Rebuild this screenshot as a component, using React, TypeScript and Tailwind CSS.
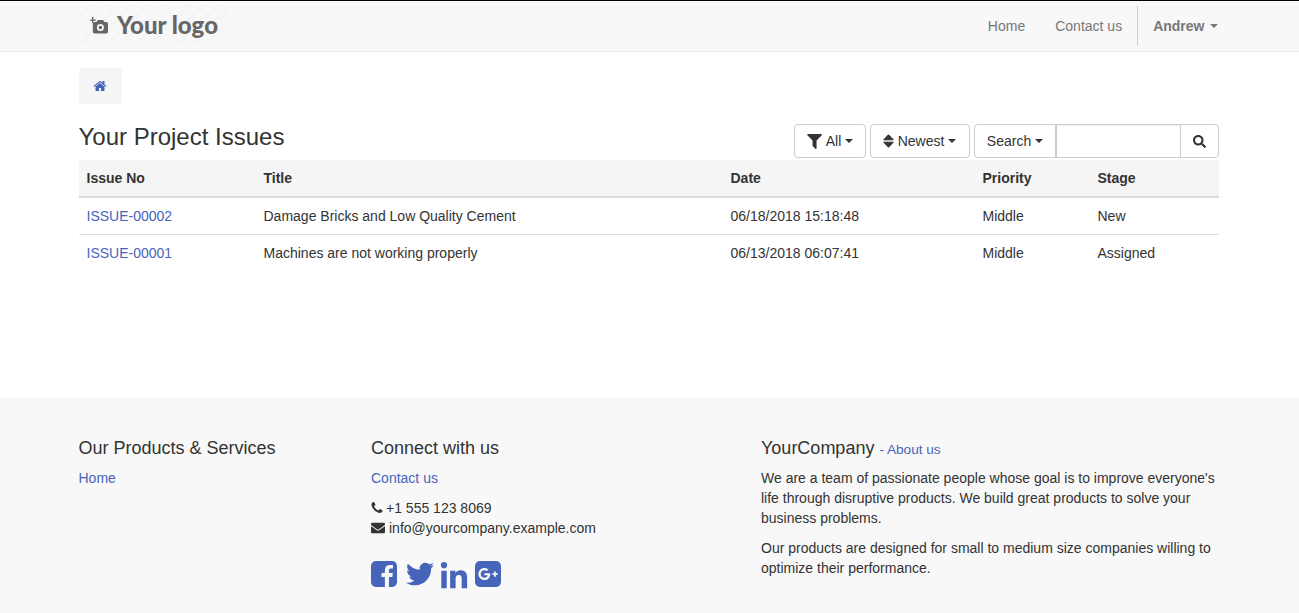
import { FaEnvelope, FaGooglePlusG, FaLinkedinIn, FaSearch, FaTwitter } from "react-icons/fa";

const issues = [
  { no: "ISSUE-00002", title: "Damage Bricks and Low Quality Cement", date: "06/18/2018 15:18:48", priority: "Middle", stage: "New" },
  { no: "ISSUE-00001", title: "Machines are not working properly", date: "06/13/2018 06:07:41", priority: "Middle", stage: "Assigned" },
];

const Caret = ({ gap = "ml-[4px]" }: { gap?: string }) => (
  <span className={`inline-block w-0 h-0 align-middle border-x-[4px] border-x-transparent border-t-[4px] border-t-current ${gap}`} />
);

function ToolButton({ children, className = "" }: { children: React.ReactNode; className?: string }) {
  return (
    <button className={`h-[34px] bg-white border border-[#ccc] text-[14px] text-[#333] flex items-center justify-center ${className}`}>
      {children}
    </button>
  );
}

export default function App() {
  return (
    <div className="h-[613px] overflow-hidden bg-white text-[14px] leading-[20px] text-[#333] font-['Liberation_Sans',Arial,sans-serif]">
      {/* Navbar */}
      <header className="h-[52px] bg-[#f8f8f8] border-t border-t-black border-b border-b-[#e7e7e7]">
        <div className="w-[1170px] ml-[63.5px] px-[15px] h-full flex items-center justify-between">
          <div className="w-[150px] h-[40px] mt-[-2px] flex items-center gap-[9.5px] pl-[11px] bg-[repeating-linear-gradient(135deg,#f8f8f8_0,#f8f8f8_6px,#f5f5f5_6px,#f5f5f5_10px)]">
            <svg width="18" height="17" viewBox="0 0 18 17" className="text-[#666] shrink-0" fill="currentColor">
              <path d="M2 0h1.400v2.400h2.400v1.400H3.400v2.400H2V3.800H0V2.400h2z" />
              <path fillRule="evenodd" d="M4.500 5h2l1.200-2h5.400l1.200 2h2a1.700 1.700 0 0 1 1.700 1.700v8.100a1.700 1.700 0 0 1-1.700 1.700H4.500a1.700 1.700 0 0 1-1.700-1.700V6.700a1.700 1.700 0 0 1 1.700-1.700zM10.400 7a3.500 3.500 0 1 0 0 7a3.500 3.500 0 0 0 0-7zM10.400 8.800a1.700 1.700 0 1 1 0 3.400a1.700 1.700 0 0 1 0-3.400z" />
            </svg>
            <span className="font-['Lato',sans-serif] font-black text-[24px] text-[#666] leading-none">Your logo</span>
          </div>
          <nav className="flex items-center text-[#777] pr-[1px]">
            <a className="px-[15px]">Home</a>
            <a className="pl-[15px] pr-[14.5px]">Contact us</a>
            <div className="h-[40px] border-l border-[#ccc] pl-[15.5px] flex items-center font-bold">
              Andrew
              <Caret gap="ml-[5px]" />
            </div>
          </nav>
        </div>
      </header>

      <main className="h-[345px] w-[1170px] ml-[63.5px] px-[15px] pt-[16px]">
        {/* Breadcrumb */}
        <div className="w-[43px] h-[36px] rounded-[4px] bg-[#f5f5f5] flex items-center justify-center text-[#4764bb]">
          <svg width="14" height="14" viewBox="0 0 1792 1792" fill="currentColor" className="mt-[-1px]">
            <path d="M1472 992v480q0 26-19 45t-45 19h-384v-384h-256v384h-384q-26 0-45-19t-19-45v-480q0-1 .5-3t.5-3l575-474 575 474q1 2 1 6zm223-69l-62 74q-8 9-21 11h-3q-13 0-21-7l-692-577-692 577q-12 8-24 7-13-2-21-11l-62-74q-8-10-7-23.500t11-21.500l719-599q32-26 76-26t76 26l244 204v-195q0-14 9-23t23-9h192q14 0 23 9t9 23v408l219 182q10 8 11 21.500t-7 23.500z" />
          </svg>
        </div>

        {/* Title and tools */}
        <div className="mt-[20px] flex items-center justify-between">
          <h3 className="text-[24px] leading-[26px] mb-[8px] text-[#333]">Your Project Issues</h3>
          <div className="flex gap-[4px]">
            <ToolButton className="w-[72px] rounded-[4px] pl-[1px]">
              <svg width="15" height="15" viewBox="175 256 1430 1408" fill="currentColor" className="mr-[4px]">
                <path d="M1595 295q17 41-14 70l-493 493v742q0 42-39 59-13 5-25 5-27 0-45-19l-256-256q-19-19-19-45v-486l-493-493q-31-29-14-70 17-39 59-39h1280q42 0 59 39z" />
              </svg>
              All
              <Caret />
            </ToolButton>
            <ToolButton className="w-[100px] rounded-[4px]">
              <svg width="11" height="14" viewBox="0 0 11 14" className="mr-[4px]" fill="currentColor" stroke="currentColor" strokeWidth="1" strokeLinejoin="round">
                <path d="M5.500 0.700L10.300 5.800H0.700zM0.700 8.200h9.600l-4.800 5.100z" />
              </svg>
              Newest
              <Caret />
            </ToolButton>
            <div className="flex">
              <ToolButton className="w-[82px] rounded-l-[4px] pl-[1px]">
                Search
                <Caret />
              </ToolButton>
              <input className="w-[125px] h-[34px] border border-[#ccc] shadow-[inset_0_1px_1px_rgba(0,0,0,0.075)]" />
              <ToolButton className="w-[39px] ml-[-1px] rounded-r-[4px]">
                <FaSearch className="text-[13px]" />
              </ToolButton>
            </div>
          </div>
        </div>

        {/* Issues table */}
        <table className="mt-[2px] w-full table-fixed border-collapse">
          <thead>
            <tr className="bg-[#f5f5f5] h-[37px] border-b-2 border-[#ddd] text-left">
              <th className="w-[177px] px-[8px] font-bold">Issue No</th>
              <th className="w-[467px] px-[8px] font-bold">Title</th>
              <th className="w-[252px] px-[8px] font-bold">Date</th>
              <th className="w-[115px] px-[8px] font-bold">Priority</th>
              <th className="px-[8px] font-bold">Stage</th>
            </tr>
          </thead>
          <tbody>
            {issues.map((issue) => (
              <tr key={issue.no} className="h-[37px] border-b border-[#ddd] last:border-b-0">
                <td className="px-[8px] text-[#4764bb]">{issue.no}</td>
                <td className="px-[8px]">{issue.title}</td>
                <td className="px-[8px]">{issue.date}</td>
                <td className="px-[8px]">{issue.priority}</td>
                <td className="px-[8px]">{issue.stage}</td>
              </tr>
            ))}
          </tbody>
        </table>
      </main>

      {/* Footer */}
      <footer className="h-[216px] bg-[#f8f8f8] pt-[41px]">
        <div className="w-[1170px] ml-[63.5px] px-[15px] grid grid-cols-[292.5px_390px_1fr]">
          <div>
            <h4 className="text-[18px] leading-[20px]">Our Products &amp; Services</h4>
            <a className="block mt-[10px] text-[#4764bb]">Home</a>
          </div>
          <div>
            <h4 className="text-[18px] leading-[20px]">Connect with us</h4>
            <a className="block mt-[10px] text-[#4764bb]">Contact us</a>
            <div className="mt-[10px] flex items-center">
              <svg width="14" height="14" viewBox="0 0 1792 1792" fill="currentColor" className="ml-[-1.5px] mr-[2.5px]">
                <path d="M1600 1240q0 27-10 70.500t-21 68.500q-21 50-122 106-94 51-186 51-27 0-53-3.500t-57.500-12.500-47-14.500-55.500-20.500-49-18q-98-35-175-83-127-79-264-216t-216-264q-48-77-83-175-3-9-18-49t-20.500-55.500-14.500-47-12.500-57.500-3.500-53q0-92 51-186 56-101 106-122 25-11 68.500-21t70.500-10q14 0 21 3 18 6 53 76 11 19 30 54t35 63.500 31 53.500q3 4 17.500 25t21.500 35.500 7 28.500q0 20-28.500 50t-62 55-62 53-28.500 46q0 9 5 22.500t8.500 20.500 14 24 11.500 19q76 137 174 235t235 174q2 1 19 11.500t24 14 20.500 8.500 22.500 5q18 0 46-28.500t53-62 55-62 50-28.500q14 0 28.500 7t35.500 21.500 25 17.500q25 15 53.500 31t63.500 35 54 30q70 35 76 53 3 7 3 21z" />
              </svg>
              +1 555 123 8069
            </div>
            <div className="flex items-center gap-[4px]">
              <FaEnvelope className="text-[14px]" />
              info@yourcompany.example.com
            </div>
            <div className="mt-[23px] flex items-start text-[#4764bb]">
              <svg width="26" height="26" viewBox="0 128 1536 1536" fill="currentColor">
                <path d="M1248 128q119 0 203.500 84.500t84.500 203.500v960q0 119-84.500 203.500t-203.500 84.500h-188v-595h199l30-232h-229v-148q0-56 23.500-84t91.500-28l122-1v-207q-63-9-178-9-136 0-217.500 80t-81.500 226v171h-200v232h200v595h-532q-119 0-203.500-84.500t-84.500-203.500v-960q0-119 84.500-203.500t203.500-84.500h960z" />
              </svg>
              <FaTwitter className="text-[28px] ml-[9px] mt-[-1px]" />
              <FaLinkedinIn className="text-[30px] ml-[5px] mt-[1px]" />
              <div className="w-[26px] h-[26px] ml-[6px] rounded-[5px] bg-[#4764bb] text-[#f8f8f8] flex items-center justify-center">
                <FaGooglePlusG className="text-[20px]" />
              </div>
            </div>
          </div>
          <div>
            <h4 className="h-[21px] text-[18px] leading-[20px]">
              YourCompany <span className="text-[13.600px] text-[#4764bb]">- About us</span>
            </h4>
            <p className="mt-[9px]">
              We are a team of passionate people whose goal is to improve everyone's life through disruptive products. We build great products to solve your business problems.
            </p>
            <p className="mt-[10px]">
              Our products are designed for small to medium size companies willing to optimize their performance.
            </p>
          </div>
        </div>
      </footer>
    </div>
  );
}
